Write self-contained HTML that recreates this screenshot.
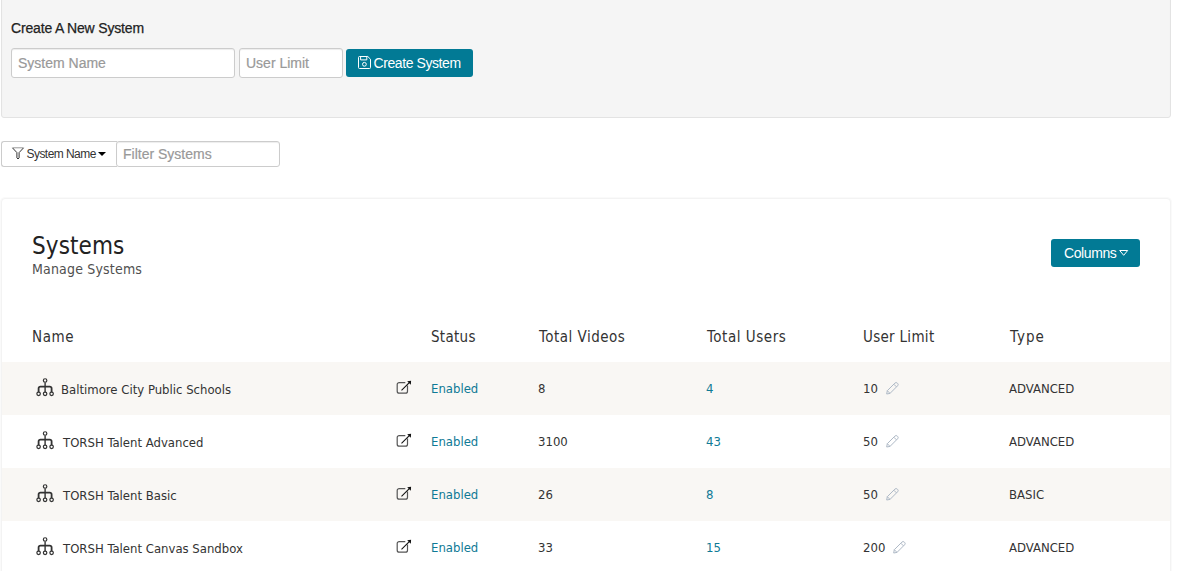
<!DOCTYPE html>
<html lang="en">
<head>
<meta charset="utf-8">
<title>Systems</title>
<style>
*{box-sizing:border-box;margin:0;padding:0}
html,body{width:1200px;height:571px;overflow:hidden;background:#fff}
body{position:relative;font-family:"DejaVu Sans Condensed","Liberation Sans",sans-serif;color:#333;font-size:13px}
.abs{position:absolute;white-space:nowrap}
.lato{font-family:"Liberation Sans",sans-serif}
.well{left:1px;top:-10px;width:1170px;height:128px;background:#f5f5f5;border:1px solid #e3e3e3;border-radius:3px;box-shadow:inset 0 1px 1px rgba(0,0,0,.05)}
.h-create{left:11px;top:20px;font-size:14px;line-height:16px;font-weight:400;color:#222;letter-spacing:-.17px;-webkit-text-stroke:.25px #222}
.inp{background:#fff;border:1px solid #ccc;border-radius:3px;box-shadow:inset 0 1px 1px rgba(0,0,0,.075);font-family:"Liberation Sans",sans-serif;font-size:14px;color:#999;-webkit-text-stroke:.2px #999;padding-left:6px}
.btn{background:#027a95;color:#fff;border-radius:3px;font-family:"Liberation Sans",sans-serif;font-size:14px}
.panel{left:1px;top:198px;width:1170px;height:400px;border:1px solid #f3f3f3;border-radius:4px;background:#fff;box-shadow:0 0 0 1px #fafafa}
.row{left:2px;width:1168px;height:53px;background:#f9f7f4}
.th{font-size:15px;line-height:20px;color:#333;top:327px;letter-spacing:.3px}
.td{font-size:13px;line-height:18px;color:#333}
.lnk{color:#0f7a96}
svg{position:absolute;overflow:visible}
</style>
</head>
<body>

<div class="abs well"></div>
<div class="abs lato h-create">Create A New System</div>
<div class="abs inp" style="left:11px;top:48px;width:224px;height:30px;line-height:28px">System Name</div>
<div class="abs inp" style="left:239px;top:48px;width:104px;height:30px;line-height:28px">User Limit</div>
<div class="abs btn" style="left:346px;top:49px;width:127px;height:28px;line-height:28px">
  <svg style="left:12px;top:6.900px" width="13" height="13" viewBox="0 0 13 13" fill="none" stroke="#fff" stroke-width="1"><path d="M.500 1.500a1 1 0 0 1 1-1h8.300l2.700 2.700v8.300a1 1 0 0 1-1 1h-10a1 1 0 0 1-1-1z"/><path d="M2.600.500v3.400h6.200v-3.400"/><circle cx="6.400" cy="8.300" r="1.900"/></svg>
  <span class="abs" style="left:27.500px;top:0;letter-spacing:-.42px">Create System</span>
</div>

<div class="abs" style="left:1px;top:141px;width:116px;height:26px;border:1px solid #ccc;border-right:0;border-radius:3px 0 0 3px;background:#fff"></div>
<svg style="left:12px;top:147px" width="12" height="13" viewBox="0 0 12 13" fill="none" stroke="#333" stroke-width="1"><path d="M.500.800h11" stroke="#999"/><path d="M.500.900l4.400 4.700v5.300l1.100 1.100 1.100-1.100v-5.300l4.400-4.700" stroke-linejoin="round"/></svg>
<div class="abs lato" style="left:26.500px;top:146px;font-size:12px;line-height:16px;color:#333;letter-spacing:-.55px">System Name</div>
<div class="abs" style="left:98px;top:152px;width:0;height:0;border-left:4px solid transparent;border-right:4px solid transparent;border-top:4px solid #000"></div>
<div class="abs inp" style="left:116px;top:141px;width:164px;height:26px;line-height:24px">Filter Systems</div>

<div class="abs panel"></div>
<div class="abs" style="left:32px;top:230px;font-size:24px;line-height:32px;color:#222;letter-spacing:.1px">Systems</div>
<div class="abs" style="left:32px;top:259px;font-size:14px;line-height:20px;color:#505050;letter-spacing:.18px">Manage Systems</div>
<div class="abs btn" style="left:1051px;top:239px;width:89px;height:28px;line-height:28px">
  <span class="abs" style="left:13px;top:0;letter-spacing:-.4px">Columns</span>
  <svg style="left:68px;top:11px" width="10" height="8" viewBox="0 0 10 8" fill="none" stroke="#fff" stroke-width="1"><path d="M.700.500h8l-4 4.800z"/></svg>
</div>

<div class="abs th" style="left:32px;letter-spacing:.6px">Name</div>
<div class="abs th" style="left:431px">Status</div>
<div class="abs th" style="left:539px;letter-spacing:.5px">Total Videos</div>
<div class="abs th" style="left:707px;letter-spacing:.55px">Total Users</div>
<div class="abs th" style="left:863px">User Limit</div>
<div class="abs th" style="left:1010px;letter-spacing:1px">Type</div>

<div class="abs row" style="top:362px"></div>
<div class="abs row" style="top:468px"></div>


<svg width="0" height="0" style="left:0;top:0">
  <defs>
    <g id="org" fill="none" stroke="#333">
      <circle cx="9.100" cy="2.500" r="1.750" stroke-width="1.200"/>
      <path d="M9.100 4.400v9.500" stroke-width="1.400"/>
      <path d="M2.600 13.900v-3.400a1.800 1.800 0 0 1 1.800-1.800h9.400a1.800 1.800 0 0 1 1.800 1.800v3.400" stroke-width="1.800"/>
      <circle cx="2.600" cy="15.800" r="1.750" stroke-width="1.200"/>
      <circle cx="9.100" cy="15.800" r="1.750" stroke-width="1.200"/>
      <circle cx="15.600" cy="15.800" r="1.750" stroke-width="1.200"/>
    </g>
    <g id="ext">
      <path d="M9.300 1.600h-6.100a2 2 0 0 0-2 2v6.600a2 2 0 0 0 2 2h6.300a2 2 0 0 0 2-2v-5.600" fill="none" stroke="#555" stroke-width="1.200"/>
      <path d="M5.500 9.400l8.300-8.300" fill="none" stroke="#111" stroke-width="1.100"/>
      <path d="M11.200 .200l3.900-.400-.300 4z" fill="#111"/>
    </g>
    <g id="pen" fill="none" stroke="#aeb9c6" stroke-width="1">
      <path d="M.700 12l.600-3.300 7.600-7.600a1.700 1.700 0 0 1 2.400 0l.300.300a1.700 1.700 0 0 1 0 2.400l-7.600 7.600z"/>
      <path d="M1.300 8.700l2.700 2.700M7.800 2.200l2.700 2.700"/>
    </g>
  </defs>
</svg>
<svg style="left:36px;top:378px" width="19" height="19"><use href="#org"/></svg>
<svg style="left:396px;top:381px" width="16" height="15"><use href="#ext"/></svg>
<svg style="left:36px;top:431px" width="19" height="19"><use href="#org"/></svg>
<svg style="left:396px;top:434px" width="16" height="15"><use href="#ext"/></svg>
<svg style="left:36px;top:484px" width="19" height="19"><use href="#org"/></svg>
<svg style="left:396px;top:487px" width="16" height="15"><use href="#ext"/></svg>
<svg style="left:36px;top:537px" width="19" height="19"><use href="#org"/></svg>
<svg style="left:396px;top:540px" width="16" height="15"><use href="#ext"/></svg>
<svg style="left:886px;top:382px" width="13" height="13"><use href="#pen"/></svg>
<svg style="left:886px;top:435px" width="13" height="13"><use href="#pen"/></svg>
<svg style="left:886px;top:488px" width="13" height="13"><use href="#pen"/></svg>
<svg style="left:893px;top:541px" width="13" height="13"><use href="#pen"/></svg>
<!-- row 1 -->
<div class="abs td" style="left:61px;top:381px">Baltimore City Public Schools</div>
<div class="abs td lnk" style="left:431px;top:380px">Enabled</div>
<div class="abs td" style="left:538px;top:380px">8</div>
<div class="abs td lnk" style="left:706px;top:380px">4</div>
<div class="abs td" style="left:863px;top:380px">10</div>
<div class="abs td" style="left:1009px;top:380px">ADVANCED</div>
<!-- row 2 -->
<div class="abs td" style="left:63px;top:434px">TORSH Talent Advanced</div>
<div class="abs td lnk" style="left:431px;top:433px">Enabled</div>
<div class="abs td" style="left:538px;top:433px">3100</div>
<div class="abs td lnk" style="left:706px;top:433px">43</div>
<div class="abs td" style="left:863px;top:433px">50</div>
<div class="abs td" style="left:1009px;top:433px">ADVANCED</div>
<!-- row 3 -->
<div class="abs td" style="left:63px;top:487px">TORSH Talent Basic</div>
<div class="abs td lnk" style="left:431px;top:486px">Enabled</div>
<div class="abs td" style="left:538px;top:486px">26</div>
<div class="abs td lnk" style="left:706px;top:486px">8</div>
<div class="abs td" style="left:863px;top:486px">50</div>
<div class="abs td" style="left:1009px;top:486px">BASIC</div>
<!-- row 4 -->
<div class="abs td" style="left:63px;top:540px">TORSH Talent Canvas Sandbox</div>
<div class="abs td lnk" style="left:431px;top:539px">Enabled</div>
<div class="abs td" style="left:538px;top:539px">33</div>
<div class="abs td lnk" style="left:706px;top:539px">15</div>
<div class="abs td" style="left:863px;top:539px">200</div>
<div class="abs td" style="left:1009px;top:539px">ADVANCED</div>

</body>
</html>
